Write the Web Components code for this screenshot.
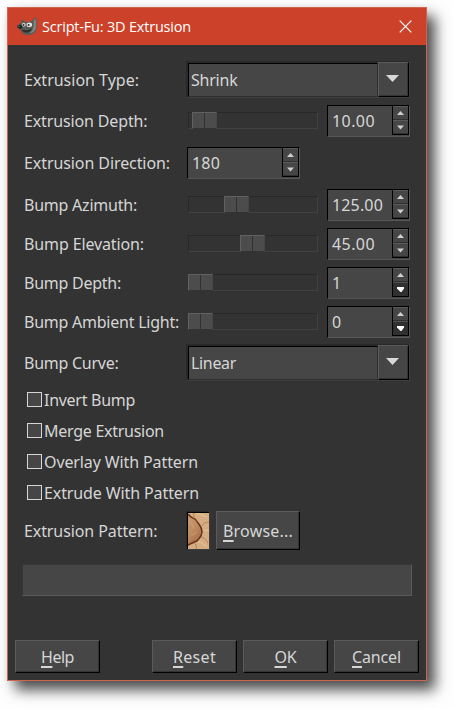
<!DOCTYPE html>
<html lang="en">
<head>
<meta charset="utf-8">
<title>Script-Fu: 3D Extrusion</title>
<style>
	body{
		margin: 0;
		padding: 7px;
		width: 440px;
		height: 694px;
		overflow: hidden;
		background: #fefefe;
	}
</style>
</head>
<body>

<sf-dialog name="Script-Fu: 3D Extrusion">
	<sf-row label="Extrusion Type:" fit="115" height="37"><sf-combo value="Shrink" fit="46.5"></sf-combo></sf-row>
	<sf-row label="Extrusion Depth:" fit="123.500" gap="7"><sf-slider pos="4"></sf-slider><sf-spin value="10.00" fit="43"></sf-spin></sf-row>
	<sf-row label="Extrusion Direction:" fit="146" gap="10"><sf-spin value="180" fit="28" wide></sf-spin></sf-row>
	<sf-row label="Bump Azimuth:" fit="113" gap="10"><sf-slider pos="36"></sf-slider><sf-spin value="125.00" fit="51"></sf-spin></sf-row>
	<sf-row label="Bump Elevation:" fit="120" gap="7"><sf-slider pos="52"></sf-slider><sf-spin value="45.00" fit="43"></sf-spin></sf-row>
	<sf-row label="Bump Depth:" fit="97" gap="7"><sf-slider pos="0"></sf-slider><sf-spin value="1" min></sf-spin></sf-row>
	<sf-row label="Bump Ambient Light:" fit="155" gap="7"><sf-slider pos="0"></sf-slider><sf-spin value="0" min></sf-spin></sf-row>
	<sf-row label="Bump Curve:" fit="94.5" gap="6" height="37"><sf-combo value="Linear" fit="45"></sf-combo></sf-row>
	<sf-check label="Invert Bump" fit="91"></sf-check>
	<sf-check label="Merge Extrusion" fit="120"></sf-check>
	<sf-check label="Overlay With Pattern" fit="154"></sf-check>
	<sf-check label="Extrude With Pattern" fit="155"></sf-check>
	<sf-row label="Extrusion Pattern:" fit="133.5" gap="6" height="39"><sf-pattern></sf-pattern><sf-button label="Browse..." fit="70" style="width: 84px; height: 39px; margin-left: 6px"></sf-button></sf-row>
	<sf-progress></sf-progress>
	<sf-button slot="actions" label="Help" fit="33" style="margin-right: auto"></sf-button>
	<sf-button slot="actions" label="Reset" fit="43"></sf-button>
	<sf-button slot="actions" label="OK" fit="22"></sf-button>
	<sf-button slot="actions" label="Cancel" fit="49"></sf-button>
</sf-dialog>

<script>
// text that is tracked to a given width
class Label extends HTMLElement {

	constructor(){

		super()

		this.shadow = this.attachShadow({mode: 'open'})

	}

	connectedCallback(){

		this.shadow.innerHTML = `
			<style>
				:host{
					display: block;
				}
				span{
					white-space: pre;
				}
				u{
					text-decoration-thickness: 2px;
					text-underline-offset: 3px;
					text-decoration-skip-ink: none;
				}
			</style>
			<span></span>
		`;

		const value = this.getAttribute('value')
		const span = this.shadow.querySelector('span')

		if( this.hasAttribute('accel') )

			span.innerHTML = `<u>${value[0]}</u>${value.slice(1)}`

		else

			span.textContent = value

		const fit = parseFloat(this.getAttribute('fit'))

		if(fit){

			const width = span.getBoundingClientRect().width

			span.style.letterSpacing = (fit - width) / value.length + 'px'

		}

	}

}

class Dialog extends HTMLElement {

	constructor(){

		super()

		this.shadow = this.attachShadow({mode: 'open'})

		this.shadow.innerHTML = `
			<style>
				:host{
					display: flex;
					flex-direction: column;
					box-sizing: border-box;
					width: 420px;
					height: 674px;
					border: 1px solid #cf6450;
					background: #333;
					color: #d6d6d6;
					font: 16px/22px "Noto Sans", sans-serif;
					box-shadow: 8px 9px 13px 0 rgba(0,0,0,.7), 0 0 7px rgba(0,0,0,.06);
				}
				header{
					display: flex;
					align-items: center;
					height: 37px;
					padding: 0 14px 0 9px;
					background: #cc412a;
					color: #fff;
					font: 14.5px/22px "Open Sans", sans-serif;
				}
				header sf-text{
					margin-left: 4px;
					flex: 1;
				}
				main{
					flex: 1;
					padding: 16px 14px 0 16px;
				}
				footer{
					display: flex;
					gap: 6px;
					padding: 0 7px 7px;
				}
			</style>
			<header>
				<svg width="21" height="20" viewBox="0 0 21 20">
					<path d="M4 6 4.500 2 7.500 4.500C10 5.500 13 5 15 3.500L19 0c1 4 1.200 8 .5 12-1 4-4 6-8.500 6-4 0-6.500-2-7.500-5L1 11.500C0 10 0 8.500 1 8z" fill="#565b57"/>
					<path d="M16.500 3.500 18.600 1.700c.7 4 .8 7 .2 9.800-1 3-3.300 4.800-6.300 5 3.500-3 5-7 4-13z" fill="#80857f"/>
					<path d="M4.500 12.500c4 1.500 7.500.8 10.500-1.500-1 3.500-3.500 5-6.500 4.500-2-.4-3.300-1.500-4-3z" fill="#2b2f2c"/>
					<path d="M.500 8.500C1.500 7 4.500 7.500 5.500 9.500c0 2-1.500 2.500-3 2.200C1 11.300 0 10 .500 8.500z" fill="#202422"/>
					<circle cx="1.900" cy="9" r=".6" fill="#aaa"/>
					<ellipse cx="6.800" cy="7.800" rx="1.900" ry="2" fill="#c8cbc6"/>
					<ellipse cx="12.300" cy="7.700" rx="2.800" ry="2.300" fill="#e2e3df"/>
					<circle cx="6.500" cy="8" r=".9" fill="#303431"/>
					<circle cx="11.600" cy="8" r="1" fill="#303431"/>
				</svg>
				<sf-text value="${this.getAttribute('name')}" fit="149"></sf-text>
				<svg width="13" height="13" viewBox="0 0 13 13"><path d="M.7.7l11.600 11.600M12.300.7.7 12.300" stroke="#fff" stroke-width="1.200"/></svg>
			</header>
			<main><slot></slot></main>
			<footer><slot name="actions"></slot></footer>
		`;

	}

}

class Row extends HTMLElement {

	constructor(){

		super()

		this.shadow = this.attachShadow({mode: 'open'})

		this.shadow.innerHTML = `
			<style>
				:host{
					display: flex;
					align-items: center;
					height: ${this.getAttribute('height') || 32}px;
					margin-top: ${this.getAttribute('gap') || 0}px;
				}
				sf-text{
					flex: none;
					width: 162px;
				}
			</style>
			<sf-text value="${this.getAttribute('label')}" fit="${this.getAttribute('fit')}"></sf-text>
			<slot></slot>
		`;

	}

}

class Combo extends HTMLElement {

	constructor(){

		super()

		this.shadow = this.attachShadow({mode: 'open'})

		this.shadow.innerHTML = `
			<style>
				:host{
					display: flex;
					box-sizing: border-box;
					width: 224px;
					height: 37px;
					border: 1px solid #292929;
					border-right-color: #3e3e3e;
					border-bottom-color: #3e3e3e;
				}
				#entry{
					box-sizing: border-box;
					width: 190px;
					height: 34px;
					margin: 1px 0 0 1px;
					border: 1px solid #000;
					border-right-color: #303030;
					border-bottom-color: #303030;
					padding: 5px 0 0 2px;
					background: #464646;
					box-shadow: -1px -1px #292929;
				}
				#button{
					display: flex;
					align-items: center;
					justify-content: center;
					box-sizing: border-box;
					width: 31px;
					height: 35px;
					padding-right: 2px;
					border: 1px solid #5a5a5a;
					border-right-color: #000;
					border-bottom-color: #000;
					background: #464646;
					box-shadow: inset -1px -1px #333;
				}
			</style>
			<div id="entry"><sf-text value="${this.getAttribute('value')}" fit="${this.getAttribute('fit')}"></sf-text></div>
			<div id="button"><svg width="13" height="9" viewBox="0 0 13 9"><path d="M0 0h13L6.500 7z" fill="#d8d8d8"/></svg></div>
		`;

	}

}

class Slider extends HTMLElement {

	constructor(){

		super()

		this.shadow = this.attachShadow({mode: 'open'})

		this.shadow.innerHTML = `
			<style>
				:host{
					box-sizing: border-box;
					width: 130px;
					height: 17px;
					margin: 0 9px 1px 2px;
					border: 1px solid #282828;
					border-right-color: #414141;
					border-bottom-color: #414141;
				}
				div{
					box-sizing: border-box;
					width: 25px;
					height: 17px;
					margin: -1px 0 0 ${this.getAttribute('pos') - 1}px;
					border: 1px solid #606060;
					border-right-color: #464646;
					border-bottom-color: #333;
					background: linear-gradient(90deg, #4c4c4c 11px, #303030 11px, #303030 12px, #4c4c4c 12px);
				}
			</style>
			<div></div>
		`;

	}

}

class Spin extends HTMLElement {

	constructor(){

		super()

		this.shadow = this.attachShadow({mode: 'open'})

		const min = this.hasAttribute('min')

		this.shadow.innerHTML = `
			<style>
				:host{
					display: flex;
					box-sizing: border-box;
					width: ${this.hasAttribute('wide') ? 113 : 83}px;
					height: 32px;
					margin-left: ${this.hasAttribute('wide') ? 1 : 0}px;
					border: 1px solid #000;
					border-right-color: #565656;
					border-bottom-color: #565656;
					background: #464646;
				}
				#value{
					flex: 1;
					padding: 4px 0 0 4px;
				}
				#arrows{
					box-sizing: border-box;
					width: 17px;
					height: 29px;
					border: solid #000;
					border-width: 0 1px 1px;
				}
				#arrows div{
					display: flex;
					align-items: center;
					justify-content: center;
					box-sizing: border-box;
					height: 14px;
					border-top: 1px solid #5a5a5a;
					border-bottom: 1px solid #303030;
				}
				#arrows .off{
					background: #303030;
					border-top-color: #505050;
				}
			</style>
			<div id="value"><sf-text value="${this.getAttribute('value')}" fit="${this.getAttribute('fit') || ''}"></sf-text></div>
			<div id="arrows">
				<div><svg width="7" height="4" viewBox="0 0 7 4"><path d="M0 4 3.500 0 7 4z" fill="#d0d0d0"/></svg></div>
				<div class="${min ? 'off' : ''}"><svg width="7" height="5" viewBox="0 0 7 5"><path d="${min ? 'M0 0h7v1.500L4.500 5h-1L0 1.500z' : 'M0 .500h7L3.500 4.500z'}" fill="${min ? '#fff' : '#d0d0d0'}"/></svg></div>
			</div>
		`;

	}

}

class Check extends HTMLElement {

	constructor(){

		super()

		this.shadow = this.attachShadow({mode: 'open'})

		this.shadow.innerHTML = `
			<style>
				:host{
					display: flex;
					align-items: center;
					box-sizing: border-box;
					height: 31px;
					padding: 6px 0 0 3px;
				}
				div{
					box-sizing: border-box;
					width: 15px;
					height: 15px;
					margin-right: 2px;
					border: 1px solid #d6d6d6;
					background: #464646;
				}
			</style>
			<div></div><sf-text value="${this.getAttribute('label')}" fit="${this.getAttribute('fit')}"></sf-text>
		`;

	}

}

class Pattern extends HTMLElement {

	constructor(){

		super()

		this.shadow = this.attachShadow({mode: 'open'})

		this.shadow.innerHTML = `
			<style>
				:host{
					box-sizing: border-box;
					width: 24px;
					height: 39px;
					border: 1px solid #292929;
					border-right-color: #3e3e3e;
					border-bottom-color: #3e3e3e;
				}
				svg{
					display: block;
					border: 1px solid #000;
					border-width: 1px 0 0 1px;
				}
			</style>
			<svg width="21" height="36" viewBox="0 0 21 36">
				<defs><linearGradient id="stone" x2=".5" y2="1"><stop stop-color="#c99b71"/><stop offset=".5" stop-color="#c08c62"/><stop offset="1" stop-color="#a87048"/></linearGradient></defs>
				<path d="M0 0h21v36H0z" fill="#d6ad82"/>
				<path d="M0 2c4 1 8 4 11 8s4 9 2 13-6 7-13 10z" fill="url(#stone)"/>
				<path d="M0 1c2 3 5 4 8 6 2 4 6 6 6 12 0 5-3 6-5 9-3 1-5 2-9 4" fill="none" stroke="#64331c" stroke-width="1.400"/>
				<path d="M6 0c-1 3 0 5 3 7M14 13c1-3 4-4 7-4M13 24c3 1 5 2 7 6M6 30c2 1 3 3 2 6" fill="none" stroke="#a8754c" stroke-width=".8"/>
				<path d="M8 1c4-1 7 2 11 3M15 16c2 3 3 0 6 2M10 29c4-1 5 4 9 4" fill="none" stroke="#ecd0a8" stroke-opacity=".8"/>
				<path d="M1 9c2 1 4 3 5 7M3 22c2 0 4-1 6-3" fill="none" stroke="#d5a77c" stroke-opacity=".7"/>
			</svg>
		`;

	}

}

class Progress extends HTMLElement {

	constructor(){

		super()

		this.shadow = this.attachShadow({mode: 'open'})

		this.shadow.innerHTML = `
			<style>
				:host{
					display: block;
					box-sizing: border-box;
					width: 390px;
					height: 32px;
					margin: 14px 0 0 -2px;
					border: 1px solid #363636;
					border-right-color: #5a5a5a;
					border-bottom-color: #5a5a5a;
					background: #464646;
				}
			</style>
		`;

	}

}

class Button extends HTMLElement {

	constructor(){

		super()

		this.shadow = this.attachShadow({mode: 'open'})

		this.shadow.innerHTML = `
			<style>
				:host{
					display: flex;
					align-items: center;
					justify-content: center;
					box-sizing: border-box;
					width: 85px;
					height: 33px;
					border: 1px solid #5a5a5a;
					border-right-color: #000;
					border-bottom-color: #000;
					background: #464646;
					box-shadow: inset -1px -1px #333;
				}
			</style>
			<sf-text accel value="${this.getAttribute('label')}" fit="${this.getAttribute('fit')}"></sf-text>
		`;

	}

}

customElements.define('sf-text', Label)
customElements.define('sf-dialog', Dialog)
customElements.define('sf-row', Row)
customElements.define('sf-combo', Combo)
customElements.define('sf-slider', Slider)
customElements.define('sf-spin', Spin)
customElements.define('sf-check', Check)
customElements.define('sf-pattern', Pattern)
customElements.define('sf-progress', Progress)
customElements.define('sf-button', Button)
</script>
</body>
</html>
